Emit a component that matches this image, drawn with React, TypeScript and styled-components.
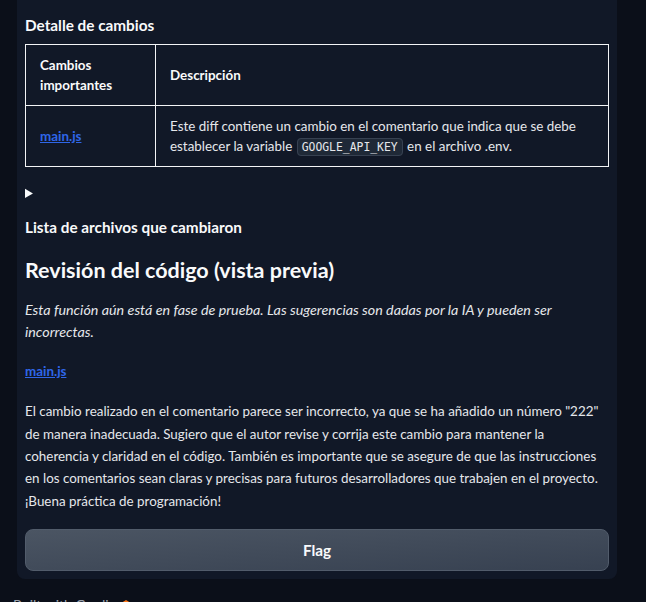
import React from "react";
import styled, { createGlobalStyle } from "styled-components";

const Global = createGlobalStyle`
  html, body {
    margin: 0;
    padding: 0;
    background: #0b0f19;
  }
  body {
    width: 646px;
    height: 602px;
    overflow: hidden;
    font-family: Lato, "Noto Sans", sans-serif;
    color: #e5e7eb;
    -webkit-font-smoothing: antialiased;
  }
`;

const Page = styled.div`
  padding: 0 29px 0 17px;
`;

const Panel = styled.section`
  width: 600px;
  box-sizing: border-box;
  background: #111827;
  border-radius: 0 0 8px 8px;
  padding: 13px 8px 8px;
  display: flex;
  flex-direction: column;
`;

const Prose = styled.div`
  font-size: 13.4px;
  line-height: 22.4px;
  color: #e5e7eb;
`;

const H3 = styled.h3<{ $mt?: number }>`
  margin: ${(p) => p.$mt ?? 0}px 0 0;
  font-size: 15.3px;
  line-height: 24px;
  font-weight: 700;
  color: #f9fafb;
`;

const H2 = styled.h2`
  margin: 16px 0 0;
  font-size: 21.5px;
  line-height: 30px;
  font-weight: 700;
  color: #f9fafb;
`;

const Table = styled.table`
  margin-top: 7px;
  width: 100%;
  border-collapse: collapse;
  table-layout: fixed;
  font-size: 13.4px;
  line-height: 20px;
`;

const Col = styled.col<{ $w?: number }>`
  width: ${(p) => (p.$w ? `${p.$w}px` : "auto")};
`;

const Th = styled.th`
  border: 1px solid #f3f4f6;
  padding: 10px 14px;
  text-align: left;
  font-weight: 700;
  color: #f9fafb;
  vertical-align: middle;
`;

const Td = styled.td`
  border: 1px solid #f3f4f6;
  padding: 10px 14px;
  text-align: left;
  color: #e5e7eb;
  vertical-align: middle;
`;

const Link = styled.a`
  color: #2f66e8;
  text-decoration: underline;
  font-weight: 700;
`;

const Code = styled.code`
  font-family: "DejaVu Sans Mono", monospace;
  font-size: 11.4px;
  line-height: 14px;
  background: #1f2937;
  border: 1px solid #374151;
  border-radius: 4px;
  padding: 1px 4px;
  margin: 0 1px;
  color: #e5e7eb;
`;

const Disclosure = styled.details`
  margin-top: 16px;
  color: #f9fafb;
  font-size: 14px;
  line-height: 20px;
`;

const Summary = styled.summary`
  cursor: pointer;
  width: 12px;
`;

const Para = styled.p<{ $mt?: number; $italic?: boolean }>`
  margin: ${(p) => p.$mt ?? 0}px 0 0;
  font-style: ${(p) => (p.$italic ? "italic" : "normal")};
  font-size: ${(p) => (p.$italic ? "14.3px" : "inherit")};
`;

const FlagButton = styled.button`
  margin-top: 17px;
  height: 42px;
  width: 100%;
  border: 1px solid #525c6b;
  border-radius: 8px;
  background: linear-gradient(to bottom right, #4b5563, #374151);
  color: #f9fafb;
  font-family: Lato, "Noto Sans", sans-serif;
  font-size: 15.3px;
  font-weight: 700;
  cursor: pointer;
`;

const Footer = styled.footer`
  margin-top: 16px;
  padding-left: 13px;
  display: flex;
  align-items: center;
  gap: 4px;
  font-size: 14px;
  line-height: 20px;
  color: #9ca3af;
`;

const Logo = () => (
  <svg width="10" height="12" viewBox="0 0 10 12" aria-hidden="true">
    <path d="M5 1 L9 3.5 L5 6 L1 3.5 Z" fill="#f97316" />
    <path d="M5 6 L9 8.5 L5 11 L1 8.5 Z" fill="#fb923c" />
  </svg>
);

export default function App() {
  return (
    <>
      <Global />
      <Page>
        <Panel>
          <Prose>
            <H3>Detalle de cambios</H3>
            <Table>
              <colgroup>
                <Col $w={130} />
                <Col />
              </colgroup>
              <thead>
                <tr>
                  <Th>Cambios importantes</Th>
                  <Th>Descripción</Th>
                </tr>
              </thead>
              <tbody>
                <tr>
                  <Td>
                    <Link href="#">main.js</Link>
                  </Td>
                  <Td>
                    Este diff contiene un cambio en el comentario que indica que se debe
                    establecer la variable <Code>GOOGLE_API_KEY</Code> en el archivo .env.
                  </Td>
                </tr>
              </tbody>
            </Table>
            <Disclosure>
              <Summary></Summary>
            </Disclosure>
            <H3 $mt={12}>Lista de archivos que cambiaron</H3>
            <H2>Revisión del código (vista previa)</H2>
            <Para $mt={14} $italic>
              Esta función aún está en fase de prueba. Las sugerencias son dadas por la IA y
              pueden ser incorrectas.
            </Para>
            <Para $mt={16}>
              <Link href="#">main.js</Link>
            </Para>
            <Para $mt={18}>
              El cambio realizado en el comentario parece ser incorrecto, ya que se ha añadido
              un número "222" de manera inadecuada. Sugiero que el autor revise y corrija este
              cambio para mantener la coherencia y claridad en el código. También es importante
              que se asegure de que las instrucciones en los comentarios sean claras y precisas
              para futuros desarrolladores que trabajen en el proyecto. ¡Buena práctica de
              programación!
            </Para>
          </Prose>
          <FlagButton type="button">Flag</FlagButton>
        </Panel>
      </Page>
      <Footer>
        <span>Built with Gradio</span>
        <Logo />
      </Footer>
    </>
  );
}
